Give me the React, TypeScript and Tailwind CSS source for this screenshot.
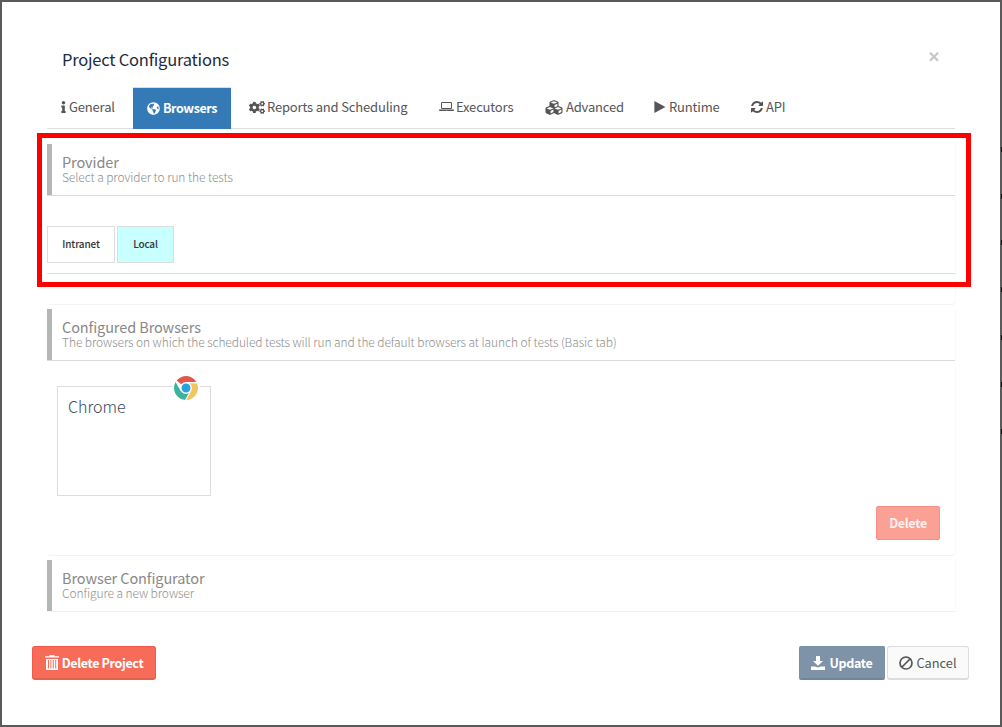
import type { ReactNode } from "react";
import { FaInfo, FaGlobeAmericas, FaCogs, FaCubes } from "react-icons/fa";

function LaptopIcon() {
  return (
    <svg viewBox="0 0 1920 1792" className="w-[15px] h-[14px] shrink-0" fill="currentColor">
      <path d="M416 1152q-66 0-113-47t-47-113v-576q0-66 47-113t113-47h1088q66 0 113 47t47 113v576q0 66-47 113t-113 47h-1088zm-32-736v576q0 13 9.5 22.5t22.5 9.5h1088q13 0 22.5-9.5t9.5-22.5v-576q0-13-9.5-22.5t-22.5-9.5h-1088q-13 0-22.5 9.5t-9.5 22.5zm1376 800h160v96q0 40-47 68t-113 28h-1600q-66 0-113-28t-47-68v-96h1760zm-720 96q16 0 16-16t-16-16h-160q-16 0-16 16t16 16h160z" />
    </svg>
  );
}

function RefreshIcon() {
  return (
    <svg viewBox="0 0 1536 1792" className="w-[12px] h-[14px] shrink-0" fill="currentColor">
      <path d="M1511 1056q0 5-1 7-64 268-268 434.5t-478 166.5q-146 0-282.5-55t-243.5-157l-129 129q-19 19-45 19t-45-19-19-45v-448q0-26 19-45t45-19h448q26 0 45 19t19 45-19 45l-137 137q71 66 161 102t187 36q134 0 250-65t186-179q11-17 53-117 8-23 30-23h192q13 0 22.5 9.5t9.5 22.5zm25-800v448q0 26-19 45t-45 19h-448q-26 0-45-19t-19-45 19-45l138-138q-148-137-349-137-134 0-250 65t-186 179q-11 17-53 117-8 23-30 23h-199q-13 0-22.5-9.5t-9.5-22.5v-7q65-268 270-434.5t480-166.5q146 0 284 55.5t245 156.5l130-129q19-19 45-19t45 19 19 45z" />
    </svg>
  );
}

function PlayIcon() {
  return (
    <svg viewBox="0 0 12 14" className="w-[12px] h-[14px] shrink-0" fill="currentColor">
      <path d="M0.4 1 L11.4 7 L0.4 13 Z" />
    </svg>
  );
}

function TrashIcon() {
  return (
    <svg viewBox="0 0 14 15" className="w-[14px] h-[15px] shrink-0" fill="currentColor">
      <path d="M4.5 0h5v1.2H14V2.6H0V1.2h4.5z" />
      <path fillRule="evenodd" d="M1 4h12v11H1zM3 5v8.5h1V5zM5.4 5v8.5h1V5zM7.8 5v8.5h1V5zM10.2 5v8.5h1V5z" />
    </svg>
  );
}

function SaveIcon() {
  return (
    <svg viewBox="0 0 14 14" className="w-[14px] h-[14px] shrink-0" fill="currentColor">
      <path d="M5 0h4v5h3L7 9.7 2 5h3z" />
      <path d="M0 10.4h4l3 1.2 3-1.2h4V14H0z" />
    </svg>
  );
}

function BanIcon() {
  return (
    <svg viewBox="0 0 14 14" className="w-[14px] h-[14px] shrink-0" fill="none" stroke="currentColor" strokeWidth="1.7">
      <circle cx="7" cy="7" r="6" />
      <path d="M3 11 L11 3" />
    </svg>
  );
}

function ChromeLogo() {
  return (
    <svg viewBox="0 0 24 24" className="w-6 h-6">
      <path d="M12 12 L2.6 4.6 A12 12 0 0 1 22.8 6.8 L12 6.8 Z" fill="#e2574c" />
      <path d="M1.8 5.7 A12 12 0 0 0 11.6 24 L16.8 14.6 L12 12 L7.2 15 Z" fill="#3db39e" />
      <path d="M23 7.2 A12 12 0 0 1 11.6 24 L16.8 14.4 L15 7 Z" fill="#efc75e" />
      <path d="M2 5.4 L7.2 14.7 M12 6.6 H23.5 M11.6 24 L16.8 14.7" stroke="#fff" strokeWidth="1.1" />
      <circle cx="12" cy="12" r="5.2" fill="#27a2db" stroke="#fff" strokeWidth="1.4" />
    </svg>
  );
}

function Tab({ icon, label, className }: { icon: ReactNode; label: string; className: string }) {
  return (
    <a className={`flex h-[40px] items-center whitespace-nowrap text-[13px] tracking-[-0.17px] text-[#555] ${className}`}>
      {icon}
      <span>{label}</span>
    </a>
  );
}

function SectionHeader({ title, subtitle, last }: { title: string; subtitle: string; last?: boolean }) {
  return (
    <div
      className={`h-[52px] border-b pl-[10px] pt-[10px] shadow-[inset_5px_0_0_#b5b5b5] ${
        last ? "border-[#f2f2f2]" : "border-[#dcdcdc]"
      }`}
    >
      <div className="pl-[5px]">
        <h3 className="h-[15px] text-[14.5px] leading-[15px] tracking-[-0.1px] text-[#888]">{title}</h3>
        <p className="text-[12px] leading-[15px] font-light tracking-[-0.09px] text-[#8e8e8e]">{subtitle}</p>
      </div>
    </div>
  );
}

// rows of the page that peek out behind the dialog
const peekRows = ["h-[47px]", "h-[46px]", "h-[47px]", "h-[48px]", "h-[47px]", "h-[47px]", "h-[47px]"];

export default function App() {
  return (
    <div className="relative flex h-[727px] w-[1002px] bg-[#5a5a5a] pl-[2px] pt-[2px] pb-[2px] font-['Noto_Sans_CJK_SC',sans-serif]">
      <main className="flex w-[998px] flex-col bg-white">
        <header className="flex h-[85px] items-start justify-between pl-[60px] pr-[61px]">
          <h1 className="mt-[44px] text-[16.5px] leading-[26px] tracking-[-0.22px] text-[#1d2b3d]">Project Configurations</h1>
          <button className="mt-[50px]" aria-label="Close">
            <svg viewBox="0 0 10 10" className="h-[10px] w-[10px]" stroke="#c8c8c8" strokeWidth="2.3">
              <path d="M1 0.8 L9 8.8 M9 0.8 L1 8.8" />
            </svg>
          </button>
        </header>

        <nav className="ml-[45px] flex h-[42px] w-[908px] border-b border-[#ddd]">
          <Tab className="ml-[12px] w-[74px] gap-[1px]" icon={<FaInfo className="h-3 w-[9px]" />} label="General" />
          <a className="flex h-[42px] w-[98px] items-center justify-center gap-[3px] border-t border-[#ddd] bg-[#337ab7] text-[12.5px] font-bold tracking-[-0.4px] text-white">
            <FaGlobeAmericas className="h-[13px] w-[13px]" />
            <span>Browsers</span>
          </a>
          <Tab className="ml-[18px] w-[190px] gap-[2px]" icon={<FaCogs className="h-[15px] w-4" />} label="Reports and Scheduling" />
          <Tab className="w-[106px] gap-[2px]" icon={<LaptopIcon />} label="Executors" />
          <Tab className="w-[109px] gap-[3px]" icon={<FaCubes className="h-[17px] w-[18px]" />} label="Advanced" />
          <Tab className="w-[97px] gap-[3px]" icon={<PlayIcon />} label="Runtime" />
          <Tab className="gap-[3px]" icon={<RefreshIcon />} label="API" />
        </nav>

        <section className="ml-[45px] mt-[15px] h-[161px] w-[908px] rounded-b border-b border-[#f3f3f3] shadow-[1px_0_0_#fafafa]">
          <SectionHeader title="Provider" subtitle="Select a provider to run the tests" />
          <div className="flex h-[78px] items-start gap-[2px] border-b border-[#ddd] pt-[30px] text-[10px] font-medium tracking-[-0.15px] text-[#333]">
            <button className="h-[37px] w-[68px] border border-[#ddd] bg-white pb-[2px]">Intranet</button>
            <button className="h-[37px] w-[57px] border border-[#ddd] bg-[#c8ffff] pb-[2px]">Local</button>
          </div>
        </section>

        <section className="ml-[45px] mt-[4px] flex h-[247px] w-[908px] flex-col rounded-b border-b border-[#f3f3f3] shadow-[1px_0_0_#fafafa]">
          <SectionHeader
            title="Configured Browsers"
            subtitle="The browsers on which the scheduled tests will run and the default browsers at launch of tests (Basic tab)"
          />
          <div className="relative ml-[10px] mt-[25px] h-[110px] w-[154px] shrink-0 border border-[#ddd] pl-[10px] pt-[6px]">
            <span className="block text-[16px] leading-[26px] font-light text-[#34495e]">Chrome</span>
            <span className="absolute right-[10px] top-[-11px] bg-white px-[2px]">
              <ChromeLogo />
            </span>
          </div>
          <button className="mr-[15px] mt-[10px] h-[34px] w-[64px] self-end rounded-xs border border-[#f98f84] bg-[#faa095] text-[12.5px] font-bold tracking-[-0.3px] text-[#fff0ef]">
            Delete
          </button>
        </section>

        <section className="ml-[45px] mt-[4px] w-[908px] shadow-[1px_0_0_#fafafa]">
          <SectionHeader title="Browser Configurator" subtitle="Configure a new browser" last />
        </section>

        <footer className="ml-[30px] mt-[34px] flex w-[937px] gap-[2px] text-[12.5px]">
          <button className="mr-auto flex h-[34px] w-[124px] items-center justify-center gap-[3px] rounded-[3px] border border-b-2 border-[#f05a47] border-b-[#e2604e] bg-[#f76c58] font-bold tracking-[-0.35px] text-white">
            <TrashIcon />
            <span className="pt-[2px]">Delete Project</span>
          </button>
          <button className="flex h-[34px] w-[86px] items-center justify-center gap-[4px] rounded-xs border border-b-2 border-[#7b90a6] border-b-[#728599] bg-[#7f93a8] font-bold tracking-[-0.3px] text-white">
            <SaveIcon />
            <span className="pt-[2px]">Update</span>
          </button>
          <button className="flex h-[34px] w-[82px] items-center justify-center gap-[3px] rounded-[3px] border border-b-2 border-[#ddd] bg-[#fafafa] text-[12.8px] text-[#555]">
            <BanIcon />
            <span>Cancel</span>
          </button>
        </footer>
      </main>

      <aside className="w-[2px] pt-[145px]">
        {peekRows.map((height, i) => (
          <div key={i} className={height}>
            <div className="ml-px h-[5px] w-px bg-[#111]" />
          </div>
        ))}
      </aside>

      {/* highlight around the provider section */}
      <div className="pointer-events-none absolute left-[37px] top-[133px] h-[154px] w-[934px] border-5 border-[#ff0000]" />
    </div>
  );
}
